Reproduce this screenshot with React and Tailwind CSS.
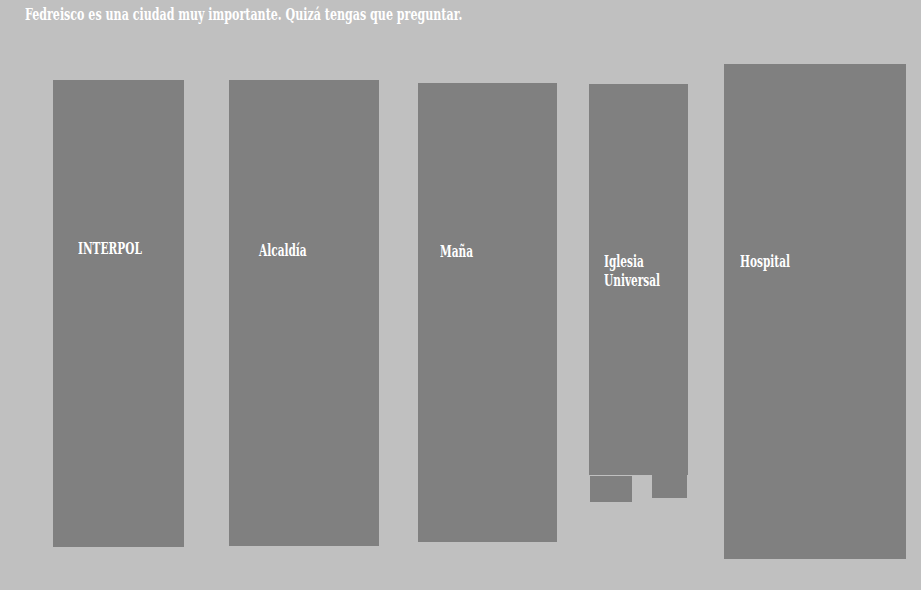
const buildings = [
  { name: ["INTERPOL"], w: "w-[131px]", h: "h-[467px]", mt: "mt-[16px]", ml: "ml-0", pl: "pl-[25px]", pt: "pt-[159px]" },
  { name: ["Alcaldía"], w: "w-[150px]", h: "h-[466px]", mt: "mt-[16px]", ml: "ml-[45px]", pl: "pl-[30px]", pt: "pt-[161px]" },
  { name: ["Maña"], w: "w-[139px]", h: "h-[459px]", mt: "mt-[19px]", ml: "ml-[39px]", pl: "pl-[22px]", pt: "pt-[159px]" },
];

function Label({ lines }) {
  return (
    <p className="origin-left scale-x-[0.69] text-[17px] leading-[19px] font-bold whitespace-nowrap text-white">
      {lines.map((l) => (
        <span key={l} className="block">
          {l}
        </span>
      ))}
    </p>
  );
}

function Building({ b }) {
  return (
    <div className={`${b.w} ${b.h} ${b.mt} ${b.ml} ${b.pl} ${b.pt} shrink-0 bg-[#808080]`}>
      <Label lines={b.name} />
    </div>
  );
}

export default function App() {
  return (
    <div className="h-[590px] w-full overflow-hidden bg-[#c0c0c0] font-['DejaVu_Serif_Condensed','DejaVu_Serif',serif]">
      <div className="h-[64px] pl-[25px] pt-[5px]">
        <p className="origin-left scale-x-[0.725] text-[17px] leading-[18px] font-bold whitespace-nowrap text-white">
          Fedreisco es una ciudad muy importante. Quizá tengas que preguntar.
        </p>
      </div>

      <div className="flex items-start pl-[53px]">
        {buildings.map((b) => (
          <Building key={b.name[0]} b={b} />
        ))}

        {/* iglesia with its two annexes */}
        <div className="ml-[32px] mt-[20px] flex shrink-0 flex-col">
          <div className="h-[391px] w-[99px] bg-[#808080] pl-[15px] pt-[168px]">
            <Label lines={["Iglesia", "Universal"]} />
          </div>
          <div className="flex items-start">
            <div className="ml-[1px] mt-[1px] h-[26px] w-[42px] bg-[#808080]"></div>
            <div className="ml-[20px] h-[23px] w-[35px] bg-[#808080]"></div>
          </div>
        </div>

        <div className="ml-[36px] h-[495px] w-[182px] shrink-0 bg-[#808080] pl-[16px] pt-[188px]">
          <Label lines={["Hospital"]} />
        </div>
      </div>
    </div>
  );
}
